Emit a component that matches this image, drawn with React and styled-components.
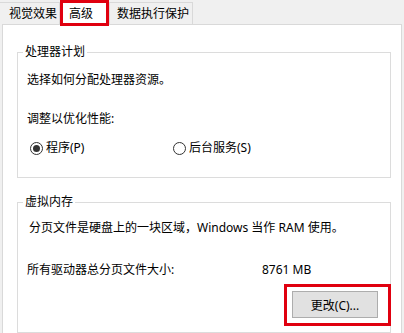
import React from "react";
import styled, { createGlobalStyle } from "styled-components";

const GlobalStyle = createGlobalStyle`
  html, body {
    margin: 0;
    padding: 0;
    background: #f0f0f0;
  }
  body {
    font-family: "Noto Sans", "Noto Sans CJK SC", sans-serif;
    font-size: 12px;
    color: #000;
  }
`;

const Window = styled.div`
  width: 404px;
  height: 333px;
  overflow: hidden;
  background: #f0f0f0;
`;

const TabStrip = styled.div`
  display: flex;
  align-items: flex-end;
  height: 24px;
  position: relative;
  z-index: 1;
`;

const Tab = styled.div`
  box-sizing: border-box;
  width: ${p => p.$w}px;
  height: 22px;
  padding-left: ${p => p.$pad}px;
  line-height: 21px;
  background: #f0f0f0;
  border: 1px solid #d9d9d9;
  border-bottom: none;
  border-left: ${p => (p.$first ? "none" : "1px solid #d9d9d9")};
  white-space: nowrap;
`;

const ActiveTab = styled.div`
  box-sizing: border-box;
  width: ${p => p.$w}px;
  height: 26px;
  margin-bottom: -2px;
  padding-left: 6px;
  line-height: 22px;
  background: #fff;
  border: 3px solid #e0000f;
  white-space: nowrap;
`;

const Panel = styled.div`
  box-sizing: border-box;
  margin-left: 2px;
  width: 400px;
  height: 320px;
  background: #fff;
  border: 1px solid #d9d9d9;
  padding: 19px 10px 0 14px;
`;

const Group = styled.fieldset`
  margin: 0;
  margin-top: ${p => p.$top || 0}px;
  padding: 0 10px ${p => p.$bottom || 0}px 9px;
  border: 1px solid #dcdcdc;
  min-width: 0;
`;

const Legend = styled.legend`
  padding: 0 2px;
  margin-left: -4px;
  line-height: 16px;
`;

const Line = styled.div`
  line-height: 16px;
  margin-top: ${p => p.$top}px;
  margin-left: ${p => p.$indent || 0}px;
  white-space: nowrap;
`;

const RadioRow = styled.div`
  display: flex;
  margin-top: 13px;
  margin-left: 3px;
  line-height: 16px;
`;

const RadioItem = styled.label`
  display: flex;
  align-items: center;
  gap: 3px;
  width: ${p => p.$w || "auto"};
`;

const RadioCircle = styled.span`
  box-sizing: border-box;
  width: 13px;
  height: 13px;
  border-radius: 50%;
  border: 1px solid #333;
  background: #fff;
  display: flex;
  align-items: center;
  justify-content: center;

  &::after {
    content: "";
    width: 7px;
    height: 7px;
    border-radius: 50%;
    background: ${p => (p.$checked ? "#333" : "transparent")};
  }
`;

const SizeRow = styled.div`
  display: grid;
  grid-template-columns: 235px auto;
  line-height: 16px;
  margin-top: 26px;
`;

const ButtonRow = styled.div`
  display: flex;
  justify-content: flex-end;
  margin: 6px -11px 0 0;
`;

const Highlight = styled.div`
  border: 3px solid #e0000f;
  padding: 4px 10px 5px 5px;
`;

const Button = styled.button`
  box-sizing: border-box;
  width: 86px;
  height: 27px;
  background: #e1e1e1;
  border: 1px solid #adadad;
  font: inherit;
  color: #000;
  padding: 0;
`;

const Radio = ({ checked, label, w }) => (
  <RadioItem $w={w}>
    <RadioCircle $checked={checked} />
    {label}
  </RadioItem>
);

export default function App() {
  return (
    <Window>
      <GlobalStyle />
      <TabStrip>
        <Tab $w={60} $pad={9} $first>视觉效果</Tab>
        <ActiveTab $w={49}>高级</ActiveTab>
        <Tab $w={84} $pad={7}>数据执行保护</Tab>
      </TabStrip>
      <Panel>
        <Group $bottom={21}>
          <Legend>处理器计划</Legend>
          <Line $top={12}>选择如何分配处理器资源。</Line>
          <Line $top={23}>调整以优化性能:</Line>
          <RadioRow>
            <Radio checked label="程序(P)" w="143px" />
            <Radio label="后台服务(S)" />
          </RadioRow>
        </Group>
        <Group $top={16} $bottom={6}>
          <Legend>虚拟内存</Legend>
          <Line $top={10} $indent={2}>分页文件是硬盘上的一块区域，Windows 当作 RAM 使用。</Line>
          <SizeRow>
            <span>所有驱动器总分页文件大小:</span>
            <span>8761 MB</span>
          </SizeRow>
          <ButtonRow>
            <Highlight>
              <Button>更改(C)...</Button>
            </Highlight>
          </ButtonRow>
        </Group>
      </Panel>
    </Window>
  );
}
